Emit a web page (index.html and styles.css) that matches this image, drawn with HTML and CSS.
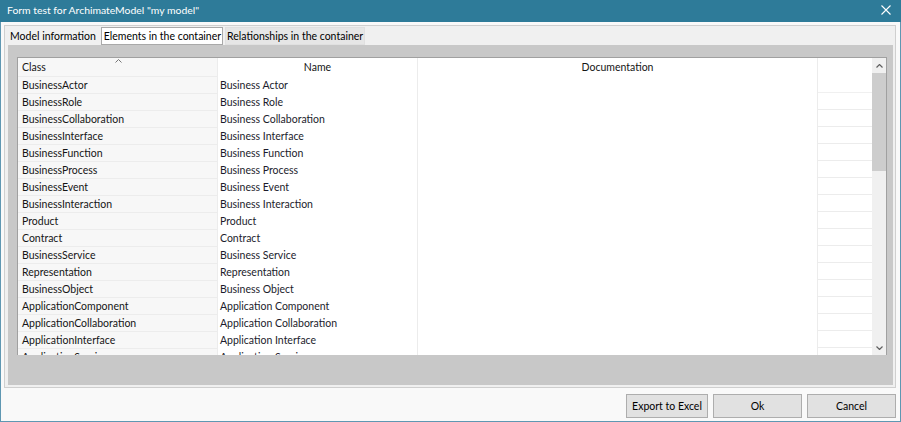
FILE: index.html
```html
<!DOCTYPE html>
<html>
<head>
<meta charset="utf-8">
<link rel="stylesheet" href="styles.css">
</head>
<body>
<div class="window">
  <div class="titlebar">
    <span class="title">Form test for ArchimateModel "my model"</span>
    <svg class="close" width="10" height="10" viewBox="0 0 10 10"><path d="M0.5 0.5L9.5 9.5M9.5 0.5L0.5 9.5" stroke="#fff" stroke-width="1.1" fill="none"/></svg>
  </div>
  <div class="tabbox">
    <div class="tabs">
      <div class="tab">Model information</div>
      <div class="tab selected">Elements in the container</div>
      <div class="tab dim">Relationships in the container</div>
    </div>
    <div class="panel">
      <div class="grid">
        <div class="cols">
          <div class="col c-class">
            <div class="hcell">Class<svg class="sort" width="7" height="4" viewBox="0 0 7 4"><path d="M0.5 3.5L3.5 0.5L6.5 3.5" stroke="#777" fill="none"/></svg></div>
            <div class="cell">BusinessActor</div>
            <div class="cell">BusinessRole</div>
            <div class="cell">BusinessCollaboration</div>
            <div class="cell">BusinessInterface</div>
            <div class="cell">BusinessFunction</div>
            <div class="cell">BusinessProcess</div>
            <div class="cell">BusinessEvent</div>
            <div class="cell">BusinessInteraction</div>
            <div class="cell">Product</div>
            <div class="cell">Contract</div>
            <div class="cell">BusinessService</div>
            <div class="cell">Representation</div>
            <div class="cell">BusinessObject</div>
            <div class="cell">ApplicationComponent</div>
            <div class="cell">ApplicationCollaboration</div>
            <div class="cell">ApplicationInterface</div>
            <div class="cell">ApplicationService</div>
          </div>
          <div class="col c-name">
            <div class="hcell center">Name</div>
            <div class="cell">Business Actor</div>
            <div class="cell">Business Role</div>
            <div class="cell">Business Collaboration</div>
            <div class="cell">Business Interface</div>
            <div class="cell">Business Function</div>
            <div class="cell">Business Process</div>
            <div class="cell">Business Event</div>
            <div class="cell">Business Interaction</div>
            <div class="cell">Product</div>
            <div class="cell">Contract</div>
            <div class="cell">Business Service</div>
            <div class="cell">Representation</div>
            <div class="cell">Business Object</div>
            <div class="cell">Application Component</div>
            <div class="cell">Application Collaboration</div>
            <div class="cell">Application Interface</div>
            <div class="cell">Application Service</div>
          </div>
          <div class="col c-doc">
            <div class="hcell center">Documentation</div>
          </div>
          <div class="col c-extra">
            <div class="hcell"></div>
            <div class="cell"></div><div class="cell"></div><div class="cell"></div><div class="cell"></div>
            <div class="cell"></div><div class="cell"></div><div class="cell"></div><div class="cell"></div>
            <div class="cell"></div><div class="cell"></div><div class="cell"></div><div class="cell"></div>
            <div class="cell"></div><div class="cell"></div><div class="cell"></div><div class="cell"></div>
            <div class="cell"></div>
          </div>
        </div>
        <div class="scrollbar">
          <div class="arrow"><svg width="7" height="4" viewBox="0 0 7 4"><path d="M0.5 3.5L3.5 0.5L6.5 3.5" stroke="#606060" stroke-width="1.2" fill="none"/></svg></div>
          <div class="thumb"></div>
          <div class="track"></div>
          <div class="arrow"><svg width="7" height="4" viewBox="0 0 7 4"><path d="M0.5 0.5L3.5 3.5L6.5 0.5" stroke="#606060" stroke-width="1.2" fill="none"/></svg></div>
        </div>
      </div>
    </div>
  </div>
  <div class="buttons">
    <button class="btn w-export">Export to Excel</button>
    <button class="btn w-ok">Ok</button>
    <button class="btn w-cancel">Cancel</button>
  </div>
</div>
</body>
</html>
```
FILE: styles.css
```css
html, body {
  margin: 0;
  padding: 0;
}
body {
  width: 901px;
  height: 422px;
  overflow: hidden;
  background: #f9f9f9;
  font-family: Lato, "Noto Sans", sans-serif;
  font-size: 10.5px;
  color: #151515;
}
.window {
  box-sizing: border-box;
  width: 901px;
  height: 422px;
  border: 1px solid #5f97b2;
  border-top: none;
  display: flex;
  flex-direction: column;
  background: #f9f9f9;
}
.titlebar {
  height: 22px;
  flex: none;
  background: #2e7b99;
  margin: 0 -1px;
  display: flex;
  align-items: center;
  padding: 0 10px 0 7px;
  color: #fff;
  font-size: 10.4px;
}
.title {
  flex: 1;
  line-height: 20px;
  padding-bottom: 2px;
}
.close {
  margin-bottom: 2px;
}
.tabbox {
  flex: none;
  box-sizing: border-box;
  margin: 3px 4px 0 3px;
  height: 363px;
  border: 1px solid #cfcfcf;
  background: #f0f0f0;
  display: flex;
  flex-direction: column;
  overflow: hidden;
}
.tabs {
  height: 18px;
  margin-top: 1px;
  display: flex;
  padding-left: 2px;
  gap: 2px;
  flex: none;
}
.tab {
  box-sizing: border-box;
  height: 18px;
  padding: 0 2px 0 2px;
  line-height: 16px;
  border: 1px solid transparent;
  color: #000;
  white-space: nowrap;
}
.tab.selected {
  background: #fff;
  border-color: #a9a9a9;
  padding: 0 1px 0 2px;
}
.tab.dim {
  background: #e6e6e6;
  border-color: #e0e0e0;
  padding: 0 1px 0 1px;
}
.panel {
  flex: 1;
  min-height: 0;
  background: #c8c8c8;
  margin: 0 2px 2px 3px;
  padding: 12px 6px 30px 9px;
  display: flex;
}
.grid {
  flex: 1;
  min-height: 0;
  border: 1px solid #a0a0a0;
  border-bottom: none;
  background: #fff;
  display: flex;
  overflow: hidden;
}
.cols {
  flex: 1;
  display: flex;
  overflow: hidden;
}
.col {
  flex: none;
  box-sizing: border-box;
  border-right: 1px solid #ececec;
}
.c-class { width: 200px; background: #f7f7f7; }
.c-name { width: 200px; }
.c-doc { width: 400px; }
.c-extra { width: 54px; border-right: none; }
.hcell {
  position: relative;
  box-sizing: border-box;
  height: 19px;
  line-height: 19px;
  padding-left: 4px;
  white-space: nowrap;
}
.hcell.center {
  text-align: center;
  padding-left: 0;
}
.c-class .hcell { border-bottom: 1px solid #ececec; }
.sort {
  position: absolute;
  left: 97px;
  top: 1px;
}
.cell {
  box-sizing: border-box;
  height: 17px;
  line-height: 16px;
  padding-left: 4px;
  white-space: nowrap;
  overflow: hidden;
}
.c-name .cell { padding-left: 2px; color: #1c1c2c; }
.c-class .cell, .c-extra .cell { border-bottom: 1px solid #ececec; }
.c-extra .hcell { border-bottom: 1px solid #f0f0f0; height: 35px; }
.scrollbar {
  flex: none;
  width: 14px;
  background: #f0f0f0;
  display: flex;
  flex-direction: column;
}
.arrow {
  height: 15px;
  flex: none;
  display: flex;
  align-items: center;
  justify-content: center;
}
.thumb {
  height: 98px;
  flex: none;
  background: #cdcdcd;
}
.track { flex: 1; }
.buttons {
  flex: 1;
  display: flex;
  justify-content: flex-end;
  align-items: flex-start;
  gap: 5px;
  padding: 6px 4px 0 0;
}
.btn {
  box-sizing: border-box;
  height: 24px;
  background: #e1e1e1;
  border: 1px solid #adadad;
  font-family: Lato, "Noto Sans", sans-serif;
  font-size: 10.5px;
  color: #000;
  padding: 0;
  margin: 0;
}
.w-export { width: 82px; }
.w-ok { width: 89px; }
.w-cancel { width: 89px; }
```
